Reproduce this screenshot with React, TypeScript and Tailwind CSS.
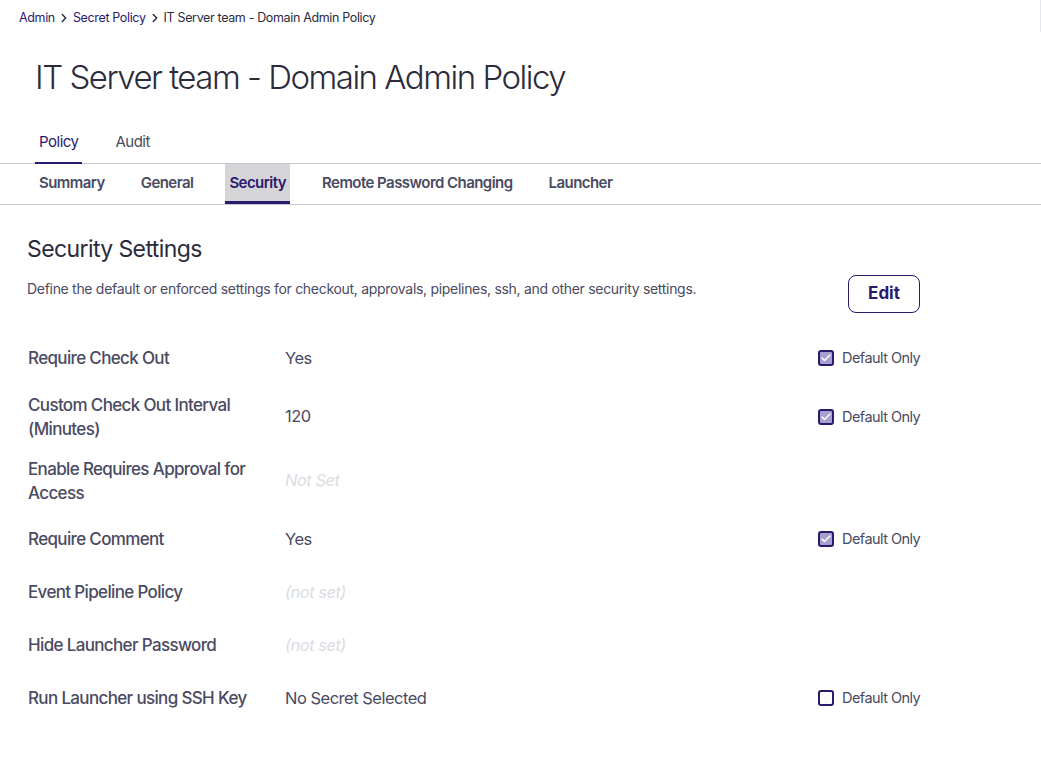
import { Check, ChevronRight } from "lucide-react";

type Row = {
  label: string;
  value: string;
  empty?: boolean;
  checkbox?: "checked" | "unchecked";
};

const rows: Row[] = [
  { label: "Require Check Out", value: "Yes", checkbox: "checked" },
  { label: "Custom Check Out Interval (Minutes)", value: "120", checkbox: "checked" },
  { label: "Enable Requires Approval for Access", value: "Not Set", empty: true },
  { label: "Require Comment", value: "Yes", checkbox: "checked" },
  { label: "Event Pipeline Policy", value: "(not set)", empty: true },
  { label: "Hide Launcher Password", value: "(not set)", empty: true },
  { label: "Run Launcher using SSH Key", value: "No Secret Selected", checkbox: "unchecked" },
];

const subTabs = ["Summary", "General", "Security", "Remote Password Changing", "Launcher"];

const DefaultOnly = ({ checked }: { checked: boolean }) => (
  <div className="flex flex-row items-center gap-2 whitespace-nowrap">
    {checked ? (
      <div className="w-4 h-4 rounded-[3px] border-2 border-[#2a1a6e] bg-[#a99fcf] flex items-center justify-center">
        <Check className="w-3 h-3 text-white" strokeWidth={3} />
      </div>
    ) : (
      <div className="w-4 h-4 rounded-[3px] border-2 border-[#2a1a6e] bg-white" />
    )}
    <span className="text-[14.5px] tracking-[-0.55px] text-[#4a4a62]">Default Only</span>
  </div>
);

export default function App() {
  return (
    <div className="min-h-screen bg-white font-['Inter',sans-serif] text-[#2b2b3b] relative">
      <div className="absolute right-0 top-0 w-px h-8 bg-[#e6e6ee]" />
      <nav className="flex flex-row items-center pl-[19px] pt-[9px] h-[27px] text-[12.5px] tracking-[-0.35px]">
        <span className="text-[#2a1a6e]">Admin</span>
        <ChevronRight className="w-3.5 h-3.5 mx-[2px] text-[#2b2b3b]" strokeWidth={2.5} />
        <span className="text-[#2a1a6e]">Secret Policy</span>
        <ChevronRight className="w-3.5 h-3.5 mx-[2px] text-[#2b2b3b]" strokeWidth={2.5} />
        <span className="text-[#2b2b3b]">IT Server team - Domain Admin Policy</span>
      </nav>

      <h1 className="pl-[35px] mt-[27px] text-[33px] leading-[46px] font-light tracking-[-1.5px] text-[#2b2b3b]">
        IT Server team - Domain Admin Policy
      </h1>

      <div className="flex flex-row pl-[35px] mt-[24px] border-b border-[#c8c8d2]">
        <div className="px-1 pt-[7px] pb-[8px] border-b-2 border-[#2a1a6e] -mb-px text-[15px] text-[#2a1a6e] tracking-[-0.5px]">
          Policy
        </div>
        <div className="ml-[29px] px-1 pt-[7px] pb-[8px] text-[15px] text-[#4a4a62] tracking-[-0.5px]">
          Audit
        </div>
      </div>

      <div className="flex flex-row pl-[35px] gap-[28px] border-b border-[#c8c8d2] h-[41px]">
        {subTabs.map((t) => (
          <div
            key={t}
            className={
              t === "Security"
                ? "px-1 flex items-center bg-[#d5d5d8] border-b-[3px] border-[#2a1a6e] text-[15px] font-semibold text-[#2a1a6e] tracking-[-0.55px] pt-[3px]"
                : "px-1 flex items-center text-[15px] font-semibold text-[#4a4a62] tracking-[-0.55px]"
            }
          >
            {t}
          </div>
        ))}
      </div>

      <div className="pl-[27px] w-[920px]">
        <h2 className="mt-[29px] text-[23px] leading-[30px] tracking-[-0.6px] text-[#2b2b3b]">Security Settings</h2>
        <div className="flex flex-row items-start justify-between">
          <p className="mt-[14px] text-[14px] text-[#4a4a62] tracking-[-0.3px]">
            Define the default or enforced settings for checkout, approvals, pipelines, ssh, and other security settings.
          </p>
          <button className="mt-[11px] w-[72px] h-[38px] rounded-lg border border-[#2a1a6e] text-[17px] font-bold text-[#2a1a6e]">
            Edit
          </button>
        </div>

        <div className="mt-[19px] flex flex-col">
          {rows.map((r) => (
            <div key={r.label} className="grid grid-cols-[258px_533px_1fr] items-center min-h-[53px] py-2">
              <div className="pl-px pr-4 text-[17px] leading-6 font-medium text-[#4a4a62] tracking-[-0.65px]">
                {r.label}
              </div>
              <div
                className={
                  r.empty
                    ? "text-[16.5px] italic text-[#dcdce2] tracking-[-0.5px]"
                    : "text-[16.5px] text-[#4a4a62] tracking-[-0.5px]"
                }
              >
                {r.value}
              </div>
              <div>{r.checkbox && <DefaultOnly checked={r.checkbox === "checked"} />}</div>
            </div>
          ))}
        </div>
      </div>
    </div>
  );
}
